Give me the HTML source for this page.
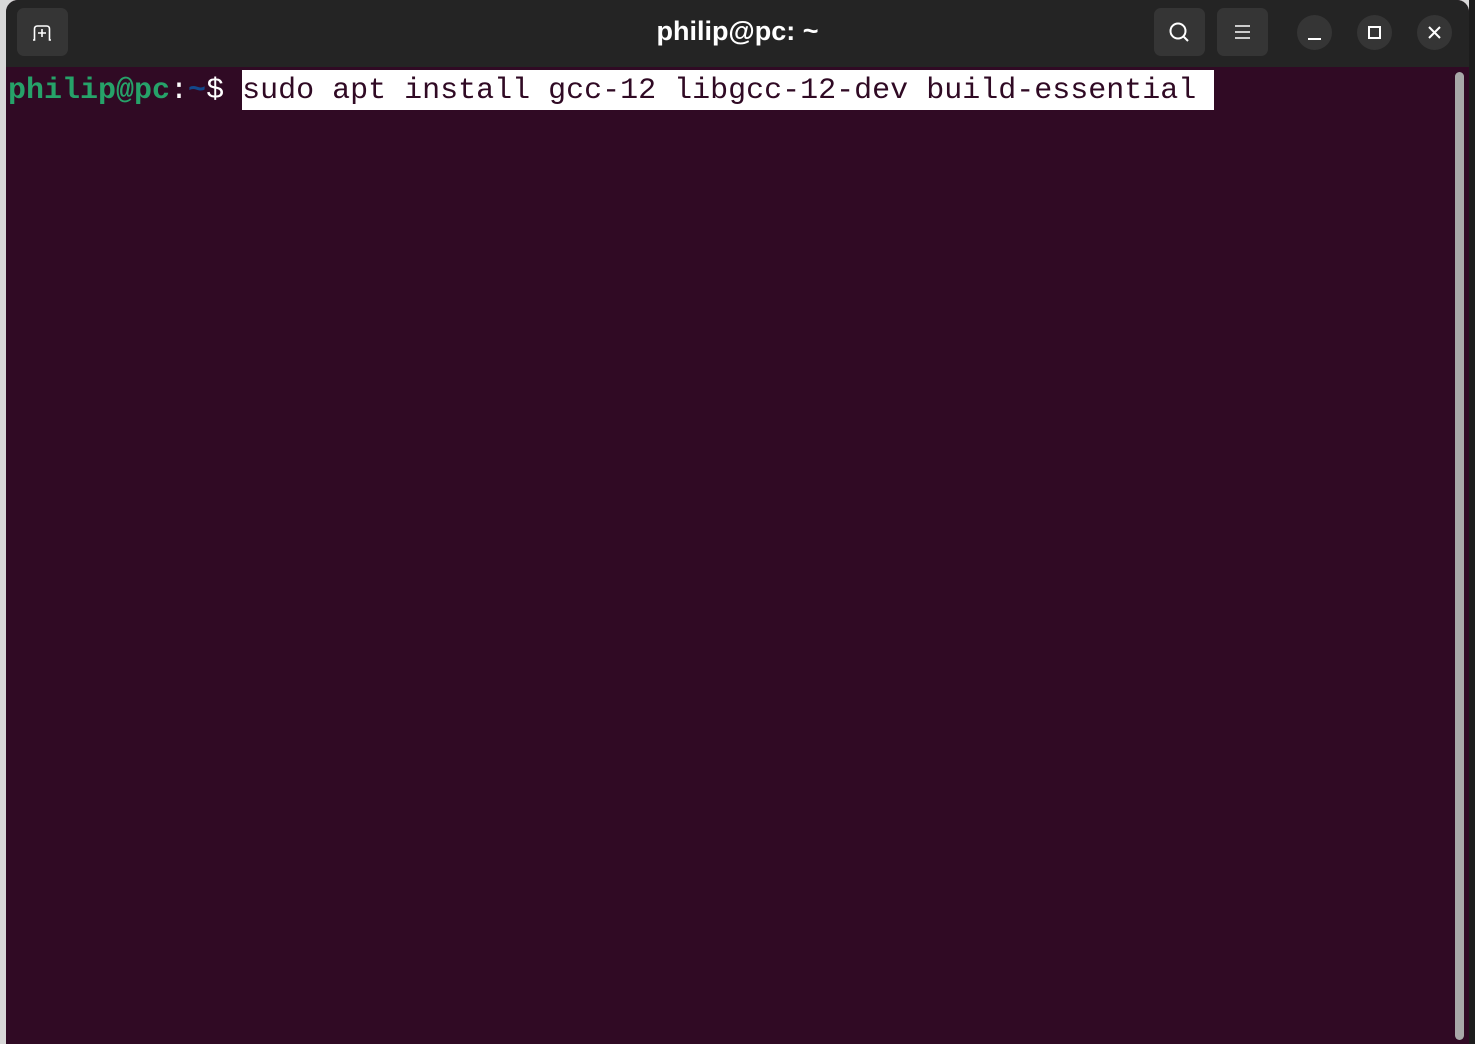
<!DOCTYPE html>
<html><head><meta charset="utf-8"><style>
html,body{margin:0;padding:0;width:1475px;height:1044px;overflow:hidden;background:#d8d8d8;}
.win{position:absolute;left:6px;top:0;width:1463px;height:1044px;background:#300a24;border-radius:12px 12px 0 0;overflow:hidden;}
.hdr{position:absolute;left:0;top:0;width:100%;height:67px;background:#242424;}
.btn{position:absolute;top:8px;width:51px;height:48px;background:#353535;border-radius:7px;}
.cbtn{position:absolute;top:15px;width:35px;height:35px;border-radius:50%;background:#353535;}
.title{position:absolute;left:0;width:100%;top:16px;text-align:center;color:#fff;font:bold 27px "Liberation Sans",sans-serif;}
.term{position:absolute;left:2px;top:70px;height:40px;font-family:"Liberation Mono","DejaVu Sans Mono",monospace;font-size:30px;line-height:37px;white-space:pre;color:#fff;}
.term span{display:inline-block;height:37px;padding-top:3px;vertical-align:top;}
.g{color:#26a269;font-weight:bold}
.b{color:#12488b;font-weight:bold}
.sel{background:#fff;color:#300a24}
.sb{position:absolute;left:1449px;top:72px;width:9px;height:968px;background:#a8a8a8;border-radius:5px;}
.right{position:absolute;left:1469px;top:0;width:6px;height:1044px;background:#1c1c1c;}
</style></head><body>
<div class="right"></div>
<div class="win">
<div class="hdr">
 <div class="btn" style="left:11px">
  <svg width="51" height="48" viewBox="0 0 51 48"><g fill="none" stroke="#fff" stroke-width="1.6"><path d="M16 32H17.5V21Q17.5 18 20.5 18H29.5Q32.5 18 32.5 21V32H34"/><path d="M21 25H29M25 21V29"/></g></svg>
 </div>
 <div class="title">philip@pc: ~</div>
 <div class="btn" style="left:1148px">
  <svg width="51" height="48" viewBox="0 0 51 48"><g fill="none" stroke="#fff" stroke-width="2"><circle cx="24" cy="23" r="7.5"/><path d="M29.5 28.5L34 33"/></g></svg>
 </div>
 <div class="btn" style="left:1211px">
  <svg width="51" height="48" viewBox="0 0 51 48"><g stroke="#fff" stroke-width="1.6"><path d="M18 18H33M18 24H33M18 30H33"/></g></svg>
 </div>
 <div class="cbtn" style="left:1291px"><svg width="35" height="35"><path d="M11 24H24" stroke="#fff" stroke-width="2"/></svg></div>
 <div class="cbtn" style="left:1351px"><svg width="35" height="35"><rect x="12" y="12" width="11" height="11" fill="none" stroke="#fff" stroke-width="2"/></svg></div>
 <div class="cbtn" style="left:1411px"><svg width="35" height="35"><path d="M12 12L23 23M23 12L12 23" stroke="#fff" stroke-width="2"/></svg></div>
</div>
<div class="term"><span class="g">philip@pc</span><span>:</span><span class="b">~</span><span>$ </span><span class="sel">sudo apt install gcc-12 libgcc-12-dev build-essential </span></div>
<div class="sb"></div>
</div>
</body></html>
